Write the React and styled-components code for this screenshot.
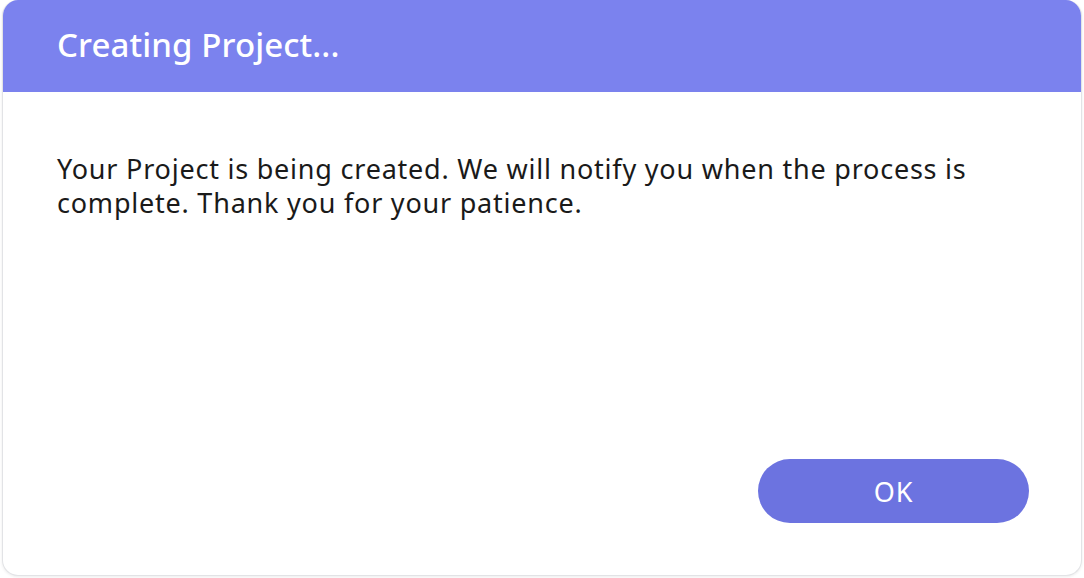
import React from "react";
import styled, { createGlobalStyle } from "styled-components";

const Global = createGlobalStyle`
  html, body { margin: 0; padding: 0; background: #ffffff; }
  body { font-family: "Noto Sans", "Open Sans", sans-serif; }
`;

const Page = styled.div`
  width: 1084px;
  height: 578px;
  box-sizing: border-box;
  padding: 0 2px 2px 2px;
  display: flex;
`;

const Dialog = styled.div`
  flex: 1;
  display: flex;
  flex-direction: column;
  border: 1px solid #e2e3e6;
  border-top: none;
  border-radius: 16px;
  overflow: hidden;
  background: #ffffff;
  box-shadow: 0 1px 3px rgba(0, 0, 0, 0.08);
`;

const Header = styled.div`
  height: 92px;
  flex: none;
  background: #7b82ee;
  display: flex;
  align-items: center;
  padding: 0 0 0 54px;
  box-sizing: border-box;
`;

const Title = styled.h1`
  margin: 0 0 4px 0;
  font-size: 33px;
  font-weight: 500;
  color: #ffffff;
  letter-spacing: 0.1px;
`;

const Body = styled.div`
  flex: 1;
  display: flex;
  flex-direction: column;
  padding: 60px 52px 52px 54px;
`;

const Message = styled.p`
  margin: 0;
  font-size: 27px;
  line-height: 34px;
  letter-spacing: 0.78px;
  color: #1a1a1a;
  max-width: 960px;
`;

const Actions = styled.div`
  margin-top: auto;
  display: flex;
  justify-content: flex-end;
`;

const Button = styled.button`
  width: 271px;
  height: 64px;
  border: none;
  border-radius: 32px;
  background: #6c73e0;
  color: #ffffff;
  font-family: "Noto Sans", "Open Sans", sans-serif;
  font-size: 27px;
  letter-spacing: 0.8px;
  padding: 0;
  cursor: pointer;
`;

export default function App() {
  return (
    <>
      <Global />
      <Page>
        <Dialog>
          <Header>
            <Title>Creating Project...</Title>
          </Header>
          <Body>
            <Message>
              Your Project is being created. We will notify you when the process is
              complete. Thank you for your patience.
            </Message>
            <Actions>
              <Button>OK</Button>
            </Actions>
          </Body>
        </Dialog>
      </Page>
    </>
  );
}
